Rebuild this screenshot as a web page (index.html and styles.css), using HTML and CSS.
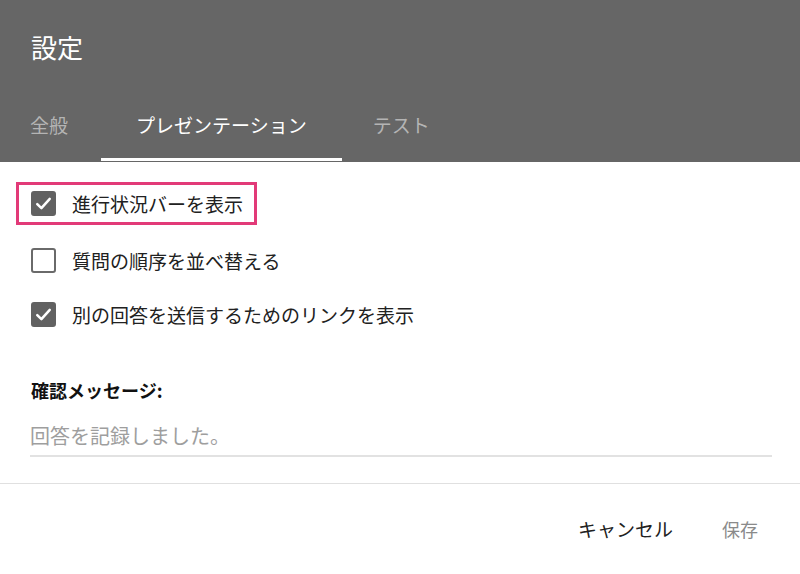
FILE: index.html
```html
<!DOCTYPE html>
<html lang="ja">
<head>
<meta charset="utf-8">
<title>設定</title>
<link rel="stylesheet" href="styles.css">
</head>
<body>
<div class="dialog">
  <header class="header">
    <h1 class="title">設定</h1>
    <nav class="tabs">
      <div class="tab">全般</div>
      <div class="tab active">プレゼンテーション</div>
      <div class="tab last">テスト</div>
    </nav>
  </header>
  <main class="content">
    <div class="row">
      <label class="option highlight">
        <span class="box checked"><svg viewBox="0 0 24 24" width="25" height="25"><path d="M6 12.5l4 4 8-9" fill="none" stroke="#fff" stroke-width="2.4" stroke-linecap="round" stroke-linejoin="round"/></svg></span>
        <span class="text">進行状況バーを表示</span>
      </label>
    </div>
    <div class="row">
      <label class="option">
        <span class="box"></span>
        <span class="text">質問の順序を並べ替える</span>
      </label>
    </div>
    <div class="row">
      <label class="option">
        <span class="box checked"><svg viewBox="0 0 24 24" width="25" height="25"><path d="M6 12.5l4 4 8-9" fill="none" stroke="#fff" stroke-width="2.4" stroke-linecap="round" stroke-linejoin="round"/></svg></span>
        <span class="text">別の回答を送信するためのリンクを表示</span>
      </label>
    </div>
    <div class="field">
      <div class="field-label">確認メッセージ:</div>
      <div class="input">回答を記録しました。</div>
    </div>
  </main>
  <footer class="footer">
    <span class="btn">キャンセル</span>
    <span class="btn disabled">保存</span>
  </footer>
</div>
</body>
</html>
```

FILE: styles.css
```css
* { box-sizing: border-box; }
html, body {
  margin: 0;
  padding: 0;
  background: #fff;
}
body {
  width: 800px;
  height: 574px;
  overflow: hidden;
  font-family: "Noto Sans CJK JP", "Noto Sans", sans-serif;
  color: #212121;
}
.header {
  background: #666666;
  height: 162px;
  display: flex;
  flex-direction: column;
}
.title {
  margin: 0;
  height: 94px;
  line-height: 94px;
  padding-left: 31px;
  font-size: 26px;
  font-weight: 400;
  color: #fff;
}
.tabs {
  display: flex;
  height: 68px;
  margin-left: -3px;
  padding-bottom: 1px;
}
.tab {
  height: 67px;
  line-height: 62px;
  padding: 0 33px;
  font-size: 19px;
  color: #b4b4b4;
  border-bottom: 3px solid transparent;
}
.tab.active {
  padding: 0 35px;
  color: #fff;
  border-bottom-color: #fff;
}
.tab.last {
  padding-left: 31px;
}
.content {
  padding-top: 17px;
}
.row {
  height: 54px;
  display: flex;
  align-items: center;
}
.option {
  display: inline-flex;
  align-items: center;
  gap: 16px;
  margin-left: 16px;
  padding: 0 11px;
  height: 43px;
  border: 3px solid transparent;
}
.option.highlight {
  border-color: #e23a78;
  margin-top: -5px;
}
.box {
  width: 25px;
  height: 25px;
  border: 2px solid #6a6a6a;
  border-radius: 3px;
  display: flex;
  align-items: center;
  justify-content: center;
  margin-left: 1px;
}
.box.checked {
  background: #616161;
  border-color: #616161;
}
.box svg { display: block; flex: none; }
.text {
  font-size: 19px;
  color: #212121;
}
.field {
  padding: 37px 28px 0 31px;
}
.field-label {
  font-size: 18px;
  font-weight: 700;
  line-height: 24px;
  color: #111;
}
.input {
  margin-top: 19px;
  margin-left: -1px;
  height: 36px;
  line-height: 30px;
  font-size: 20px;
  color: #9e9e9e;
  border-bottom: 2px solid #e2e2e2;
}
.footer {
  margin-top: 26px;
  border-top: 1px solid #e0e0e0;
  display: flex;
  justify-content: flex-end;
  gap: 49px;
  padding: 33px 42px 0 0;
}
.btn {
  font-size: 19px;
  line-height: 24px;
  color: #212121;
}
.btn.disabled {
  color: #8a8a8a;
  font-size: 18px;
}
```
